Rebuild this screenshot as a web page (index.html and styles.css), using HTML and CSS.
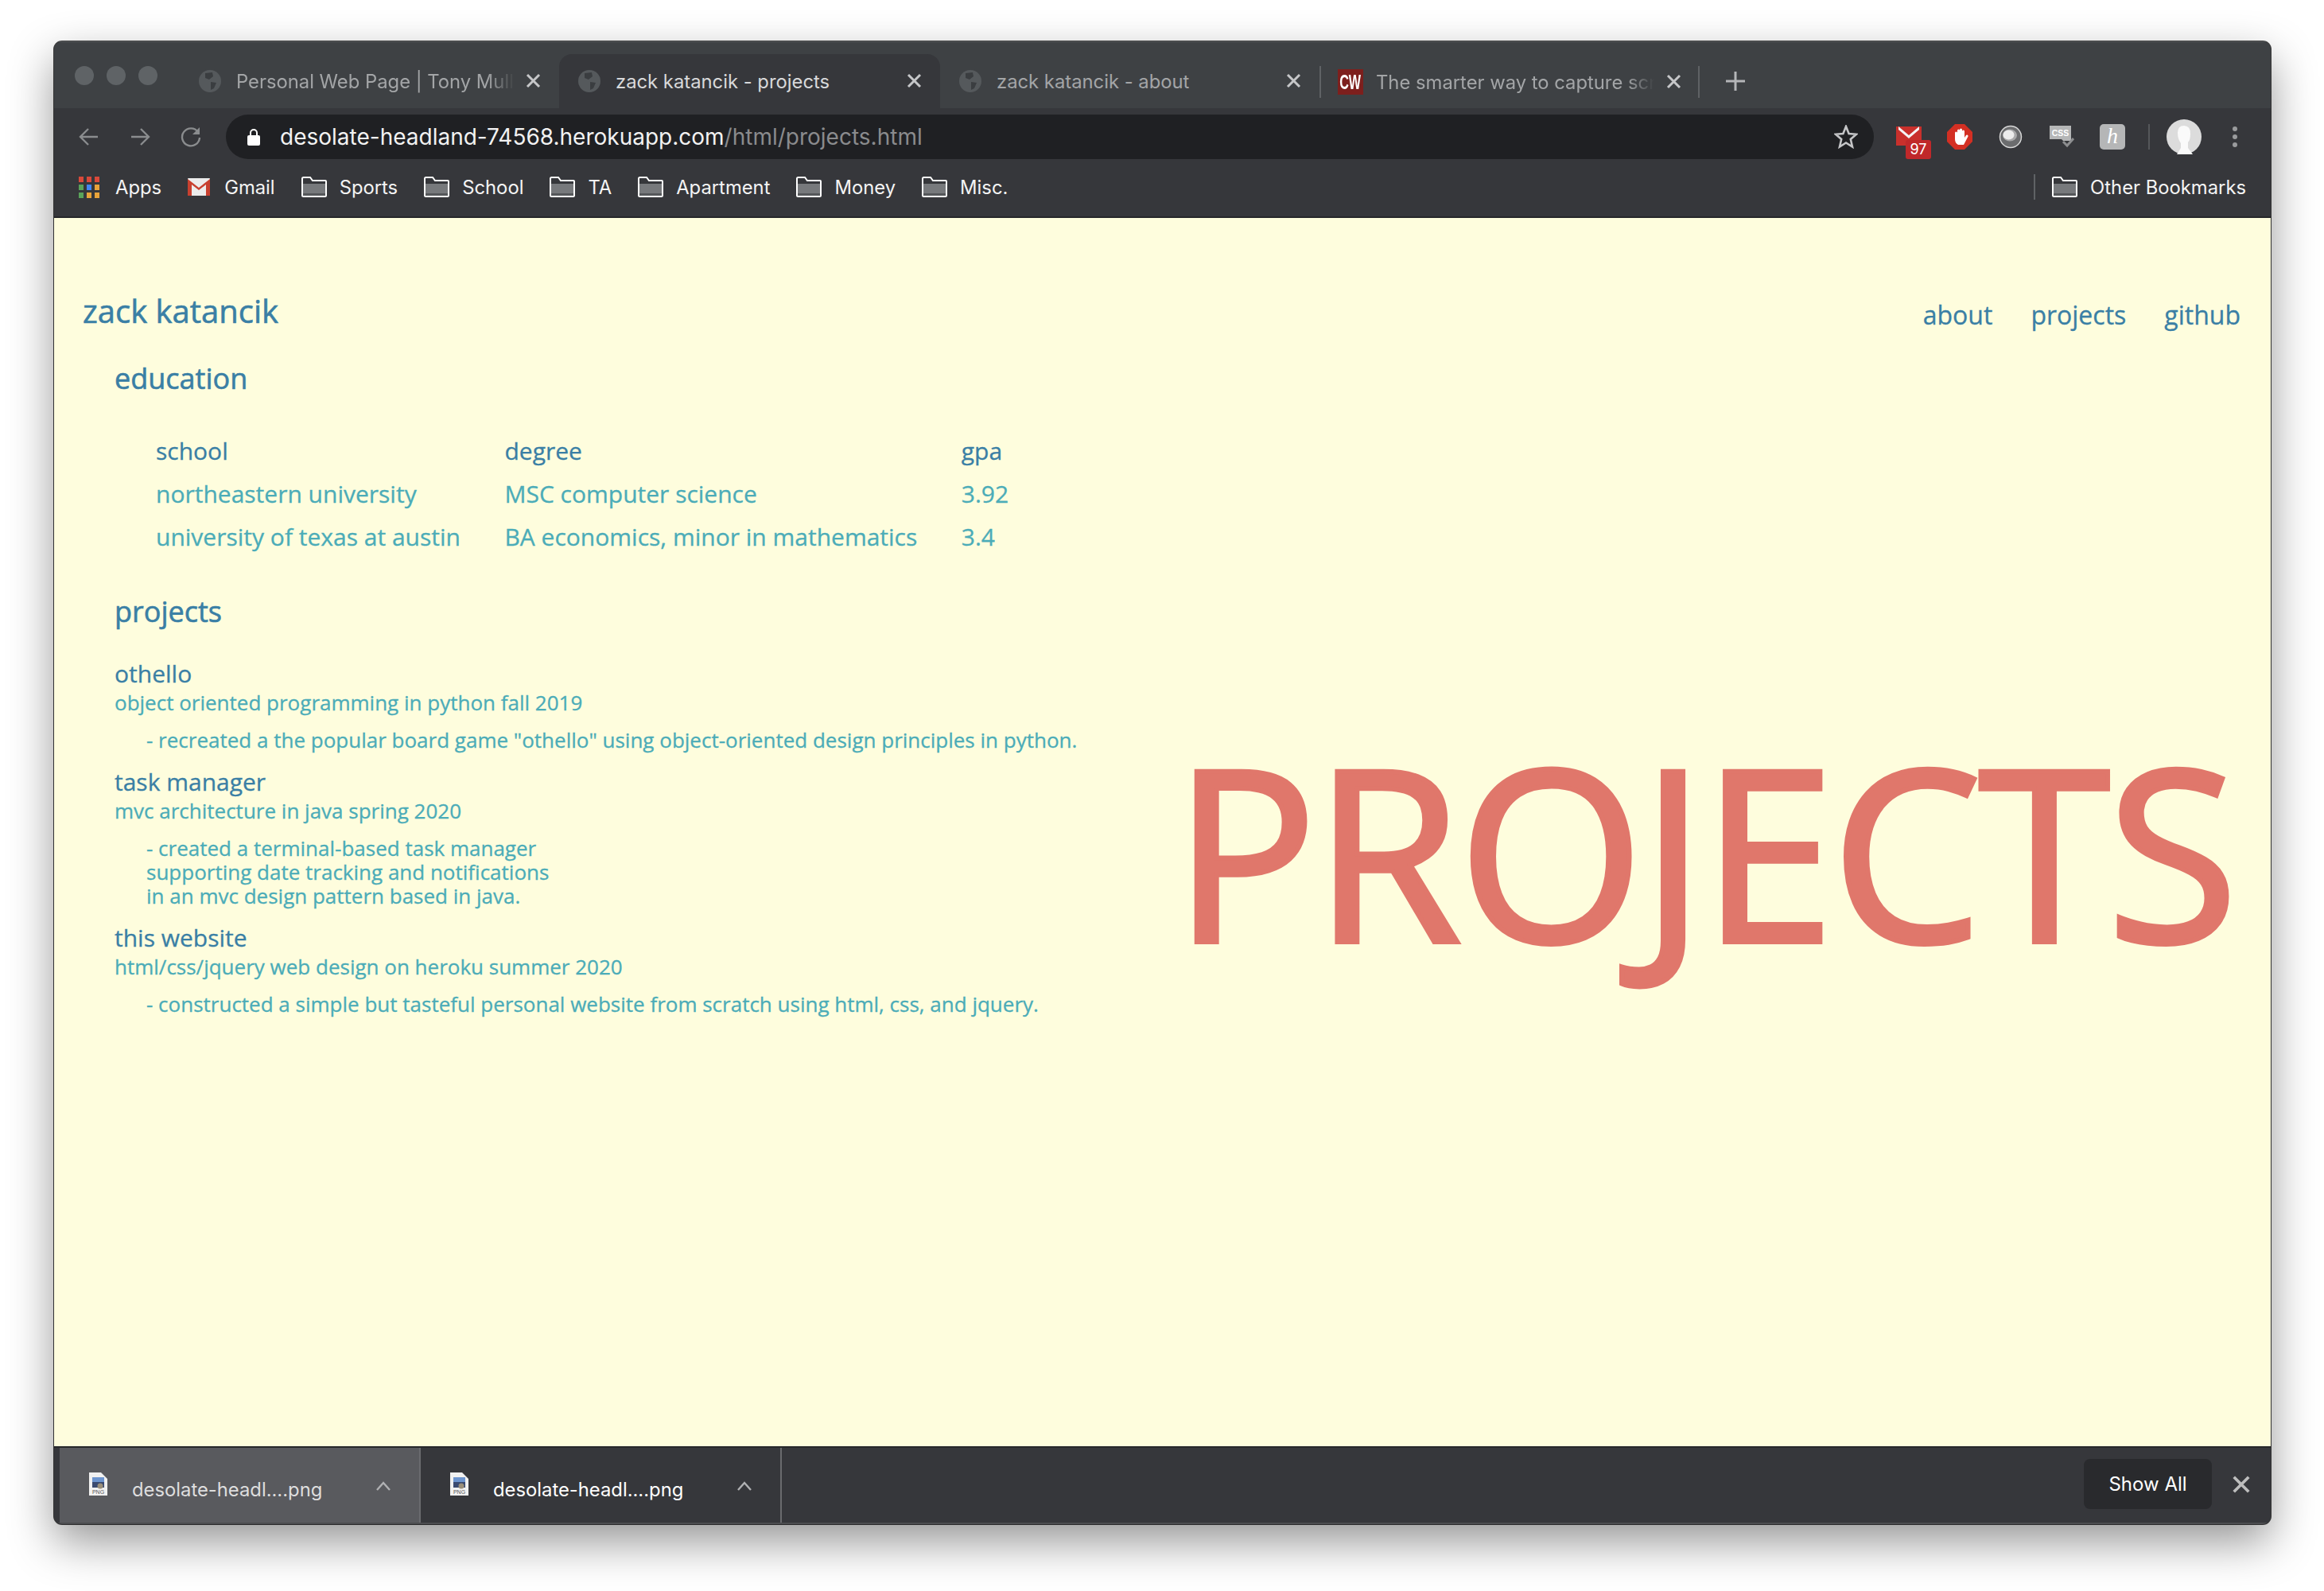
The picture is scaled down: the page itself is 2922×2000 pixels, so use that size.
FILE: index.html
```html
<!DOCTYPE html>
<html>
<head>
    <meta charset="utf-8">
    <link rel="stylesheet" href="styles.css">
    <title>zack katancik - projects</title>
</head>
<body>
<svg width="0" height="0" class="defs">
    <symbol id="globe" viewBox="0 0 28 28">
        <circle cx="14" cy="14" r="14" fill="#55595c"/>
        <path d="M8 4 L17 3 L18 8 L13 12 L8 10 Z M15 15 L22 16 L19 23 L15 25 Z" fill="#3a3d40"/>
    </symbol>
    <symbol id="folder" viewBox="0 0 32 26">
        <path d="M1 5 V2.5 Q1 1 2.5 1 H11 L14 5 H30 Q31 5 31 6 V23.5 Q31 25 29.5 25 H2.5 Q1 25 1 23.5 Z" fill="none" stroke="#fff" stroke-width="2"/>
        <rect x="2" y="9" width="28" height="12" fill="#77797c"/>
        <rect x="2" y="21" width="28" height="3" fill="#55575a"/>
    </symbol>
    <symbol id="close" viewBox="0 0 14 14">
        <path d="M2 2 L12 12 M12 2 L2 12" fill="none" stroke="currentColor" stroke-width="2"/>
    </symbol>
    <symbol id="pngfile" viewBox="0 0 23 29">
        <path d="M0 0 H15 L23 8 V29 H0 Z" fill="#f1f1f1"/>
        <rect x="4" y="6" width="15" height="8" fill="#6d95cf"/>
        <rect x="4" y="12" width="15" height="7" fill="#3a4a70"/>
        <circle cx="14" cy="17" r="3.5" fill="#9a8f7a"/>
        <text x="11.5" y="27" font-size="7" text-anchor="middle" fill="#555" font-family="Liberation Sans, sans-serif">PNG</text>
    </symbol>
</svg>

<div class="window">
    <div class="tabstrip">
        <div class="lights"><span></span><span></span><span></span></div>
        <div class="tab tab-first">
            <svg class="favicon"><use href="#globe"/></svg>
            <span class="tab-title fade">Personal Web Page | Tony Mull</span>
            <svg class="tab-close"><use href="#close"/></svg>
        </div>
        <div class="tab tab-active">
            <svg class="favicon"><use href="#globe"/></svg>
            <span class="tab-title">zack katancik - projects</span>
            <svg class="tab-close"><use href="#close"/></svg>
        </div>
        <div class="tab tab-third">
            <svg class="favicon"><use href="#globe"/></svg>
            <span class="tab-title">zack katancik - about</span>
            <svg class="tab-close"><use href="#close"/></svg>
        </div>
        <div class="tab tab-fourth">
            <span class="cw-icon"><span>CW</span></span>
            <span class="tab-title fade">The smarter way to capture scr</span>
            <svg class="tab-close"><use href="#close"/></svg>
        </div>
        <svg class="new-tab" viewBox="0 0 24 24"><path d="M12 0 V24 M0 12 H24" stroke="#b4b6b8" stroke-width="3" fill="none"/></svg>
    </div>

    <div class="toolbar">
        <svg class="nav-icon" viewBox="0 0 28 28"><path d="M25 14 H4 M13 4 L3 14 L13 24" fill="none" stroke="#8a8c8e" stroke-width="2.4"/></svg>
        <svg class="nav-icon" viewBox="0 0 28 28"><path d="M3 14 H24 M15 4 L25 14 L15 24" fill="none" stroke="#8a8c8e" stroke-width="2.4"/></svg>
        <svg class="nav-icon" viewBox="0 0 28 28"><path d="M23 8 A11 11 0 1 0 25 15" fill="none" stroke="#8a8c8e" stroke-width="2.4"/><path d="M25 2 V11 H16 Z" fill="#8a8c8e"/></svg>
        <div class="omnibox">
            <svg class="lock" viewBox="0 0 16 22"><path d="M4 9 V6 A4 4 0 0 1 12 6 V9" fill="none" stroke="#fff" stroke-width="2"/><rect x="0" y="9" width="16" height="13" rx="2" fill="#fff"/></svg>
            <span class="url">desolate-headland-74568.herokuapp.com<span class="url-path">/html/projects.html</span></span>
            <svg class="star" viewBox="0 0 30 30"><path d="M15 2 L18.6 11 L28 11.8 L20.8 18 L23 27.5 L15 22.5 L7 27.5 L9.2 18 L2 11.8 L11.4 11 Z" fill="none" stroke="#c4c5c7" stroke-width="2.6"/></svg>
        </div>
        <div class="extensions">
            <div class="ext ext-gmail">
                <svg viewBox="0 0 32 24"><rect width="32" height="24" fill="#c9302c"/><path d="M3 0 L16 11 L29 0 V4 L16 15 L3 4 Z" fill="#f4f4f4"/></svg>
                <span class="badge">97</span>
            </div>
            <svg class="ext" viewBox="0 0 32 32"><path d="M10 0 H22 L32 10 V22 L22 32 H10 L0 22 V10 Z" fill="#d32f23"/><path d="M10 19 V11 a1.5 1.5 0 0 1 3 0 V8 a1.5 1.5 0 0 1 3 0 V7 a1.5 1.5 0 0 1 3 0 V9 a1.5 1.5 0 0 1 3 0 V17 L24 14 a1.5 1.5 0 0 1 2.5 1.5 L21 26 H14 Q10 24 10 19 Z" fill="#fff"/></svg>
            <svg class="ext" viewBox="0 0 32 32"><circle cx="16" cy="16" r="13.5" fill="#6b6c6e" stroke="#d8d8d8" stroke-width="1.5"/><ellipse cx="15" cy="14" rx="9" ry="7.5" fill="#a9a9aa"/><ellipse cx="13.5" cy="13.5" rx="7" ry="6" fill="#ececec"/></svg>
            <svg class="ext" viewBox="0 0 32 32"><path d="M1 2 H28 V21 H18 L16 19 H1 Z" fill="#b5b6b7"/><text x="14.5" y="15" font-size="10.5" font-weight="bold" text-anchor="middle" fill="#fff" font-family="Liberation Sans, sans-serif">CSS</text><path d="M18 22 L23 27 L31 18" fill="none" stroke="#8c8d8f" stroke-width="3"/></svg>
            <div class="ext ext-h">h</div>
        </div>
        <div class="vrule"></div>
        <div class="avatar">
            <svg viewBox="0 0 44 44"><circle cx="22" cy="22" r="22" fill="#dcdcdc"/><path d="M22 8 Q30 8 30 18 Q30 26 27 29 V36 L33 44 H13 L18 36 V30 Q14 25 14 17 Q14 8 22 8 Z" fill="#fafafa"/></svg>
        </div>
        <div class="kebab"><span></span><span></span><span></span></div>
    </div>

    <div class="bookmarks">
        <div class="bm bm-apps">
            <svg class="apps-grid" viewBox="0 0 26 27">
                <g fill="#d9493a"><rect x="0" y="0" width="6" height="7"/><rect x="10" y="0" width="6" height="7"/><rect x="20" y="0" width="6" height="7"/></g>
                <g><rect x="0" y="10" width="6" height="7" fill="#5aa35a"/><rect x="10" y="10" width="6" height="7" fill="#4285f4"/><rect x="20" y="10" width="6" height="7" fill="#e8a33a"/></g>
                <g><rect x="0" y="20" width="6" height="7" fill="#5aa35a"/><rect x="10" y="20" width="6" height="7" fill="#e8a33a"/><rect x="20" y="20" width="6" height="7" fill="#e8a33a"/></g>
            </svg>
            Apps
        </div>
        <div class="bm bm-gmail">
            <svg class="gmail-icon" viewBox="0 0 28 22"><rect width="28" height="22" rx="1" fill="#ececec"/><path d="M0 1 L14 12 L28 1 V22 H23 V8 L14 15 L5 8 V22 H0 Z" fill="#c8402f"/></svg>
            Gmail
        </div>
        <div class="bm"><svg class="folder"><use href="#folder"/></svg>Sports</div>
        <div class="bm"><svg class="folder"><use href="#folder"/></svg>School</div>
        <div class="bm"><svg class="folder"><use href="#folder"/></svg>TA</div>
        <div class="bm"><svg class="folder"><use href="#folder"/></svg>Apartment</div>
        <div class="bm"><svg class="folder"><use href="#folder"/></svg>Money</div>
        <div class="bm"><svg class="folder"><use href="#folder"/></svg>Misc.</div>
        <div class="bm bm-other"><svg class="folder"><use href="#folder"/></svg>Other Bookmarks</div>
    </div>

    <div class="page">
        <div class="page-top">
            <div class="site-name">zack katancik</div>
            <div class="site-nav">
                <span>about</span>
                <span>projects</span>
                <span>github</span>
            </div>
        </div>
        <div class="page-main">
            <div class="resume">
                <h2 class="section-title">education</h2>
                <table class="edu">
                    <tr class="edu-head"><td>school</td><td>degree</td><td>gpa</td></tr>
                    <tr><td>northeastern university</td><td>MSC computer science</td><td>3.92</td></tr>
                    <tr><td>university of texas at austin</td><td>BA economics, minor in mathematics</td><td>3.4</td></tr>
                </table>
                <h2 class="section-title projects-title">projects</h2>
                <div class="project">
                    <div class="project-name">othello</div>
                    <div class="project-sub">object oriented programming in python fall 2019</div>
                    <div class="project-desc">- recreated a the popular board game "othello" using object-oriented design principles in python.</div>
                </div>
                <div class="project">
                    <div class="project-name">task manager</div>
                    <div class="project-sub">mvc architecture in java spring 2020</div>
                    <div class="project-desc">- created a terminal-based task manager<br>supporting date tracking and notifications<br>in an mvc design pattern based in java.</div>
                </div>
                <div class="project">
                    <div class="project-name">this website</div>
                    <div class="project-sub">html/css/jquery web design on heroku summer 2020</div>
                    <div class="project-desc">- constructed a simple but tasteful personal website from scratch using html, css, and jquery.</div>
                </div>
            </div>
            <div class="big-word">PROJECTS</div>
        </div>
    </div>

    <div class="downloads">
        <div class="dl dl-hover">
            <svg class="dl-icon"><use href="#pngfile"/></svg>
            <span class="dl-name">desolate-headl....png</span>
            <svg class="dl-chev" viewBox="0 0 20 12"><path d="M2 11 L10 2 L18 11" fill="none" stroke="#b0b1b3" stroke-width="2.4"/></svg>
        </div>
        <div class="dl">
            <svg class="dl-icon"><use href="#pngfile"/></svg>
            <span class="dl-name">desolate-headl....png</span>
            <svg class="dl-chev" viewBox="0 0 20 12"><path d="M2 11 L10 2 L18 11" fill="none" stroke="#b0b1b3" stroke-width="2.4"/></svg>
        </div>
        <div class="show-all">Show All</div>
        <svg class="dl-close"><use href="#close"/></svg>
    </div>
</div>
</body>
</html>
```

FILE: styles.css
```css
html, body {
    margin: 0;
    background: #fff;
}
body {
    height: 2000px;
    padding: 52px 0 0 68px;
    box-sizing: border-box;
}
.defs {
    position: absolute;
}
.window {
    width: 2787px;
    height: 1864px;
    display: flex;
    flex-direction: column;
    border-radius: 10px;
    overflow: hidden;
    background: #36373b;
    box-shadow: 0 22px 56px rgba(0, 0, 0, 0.42), 0 0 0 1px rgba(0, 0, 0, 0.75);
    font-family: Inter, sans-serif;
}

/* tab strip */
.tabstrip {
    height: 84px;
    flex: none;
    display: flex;
    align-items: flex-end;
    background: #3e4144;
    border-top: 1px solid #55585b;
    box-sizing: border-box;
}
.lights {
    width: 162px;
    padding: 30px 0 0 26px;
    box-sizing: border-box;
    display: flex;
    gap: 16px;
    flex: none;
    align-self: flex-start;
}
.lights span {
    width: 24px;
    height: 24px;
    border-radius: 50%;
    background: #5f6366;
}
.tab {
    height: 68px;
    display: flex;
    align-items: center;
    box-sizing: border-box;
    color: #a3a5a7;
    font-size: 23.8px;
    flex: none;
    position: relative;
}
.tab-first {
    width: 473px;
    padding-left: 20px;
}
.tab-active {
    width: 479px;
    padding-left: 24px;
    background: #36373b;
    border-radius: 16px 16px 0 0;
    color: #d8d9da;
}
.tab-third {
    width: 477px;
    padding-left: 24px;
}
.tab-fourth {
    width: 478px;
    padding-left: 21px;
    border-left: 2px solid #5f6265;
    height: 40px;
    margin-bottom: 13px;
    border-right: 2px solid #5f6265;
}
.favicon {
    width: 28px;
    height: 28px;
    flex: none;
    margin-right: 19px;
}
.tab-title {
    white-space: nowrap;
    overflow: hidden;
    width: 350px;
    flex: none;
}
.fade {
    -webkit-mask-image: linear-gradient(to right, #000 90%, transparent 100%);
    mask-image: linear-gradient(to right, #000 90%, transparent 100%);
}
.tab-close {
    width: 21px;
    height: 21px;
    color: #c6c7c9;
    position: absolute;
    right: 22px;
    top: 23px;
}
.tab-fourth .tab-close {
    top: 9px;
    right: 20px;
}
.cw-icon {
    width: 32px;
    height: 32px;
    margin-right: 16px;
    flex: none;
    background: #7d1f1d;
    color: #fff;
    font-family: "Liberation Sans", sans-serif;
    font-size: 26px;
    font-weight: bold;
    line-height: 32px;
    text-align: center;
    display: flex;
    justify-content: center;
}
.cw-icon span {
    transform: scaleX(0.62);
}
.new-tab {
    width: 24px;
    height: 24px;
    margin: 0 0 22px 33px;
}

/* toolbar */
.toolbar {
    height: 72px;
    flex: none;
    display: flex;
    align-items: center;
    padding: 0 0 0 30px;
    box-sizing: border-box;
    gap: 36px;
    background: #36373b;
}
.nav-icon {
    width: 28px;
    height: 28px;
    flex: none;
}
.omnibox {
    width: 2072px;
    height: 56px;
    margin-left: -6px;
    display: flex;
    align-items: center;
    background: #1f2023;
    border-radius: 28px;
    padding: 0 20px 0 27px;
    box-sizing: border-box;
    flex: none;
}
.lock {
    width: 16px;
    height: 22px;
    flex: none;
}
.url {
    margin-left: 25px;
    font-size: 28px;
    color: #f2f2f2;
    flex: 1;
    white-space: nowrap;
}
.url-path {
    color: #8a8b8d;
}
.star {
    width: 30px;
    height: 30px;
    flex: none;
}
.extensions {
    display: flex;
    align-items: center;
    gap: 32px;
    margin-left: -8px;
}
.ext {
    width: 32px;
    height: 32px;
    flex: none;
    position: relative;
}
.ext-gmail svg {
    width: 32px;
    height: 24px;
    display: block;
    position: absolute;
    top: 3px;
}
.badge {
    position: absolute;
    left: 12px;
    top: 20px;
    width: 32px;
    height: 24px;
    border-radius: 3px;
    background: #c0282a;
    color: #fff;
    font-size: 18px;
    line-height: 24px;
    text-align: center;
}
.ext-h {
    background: #b5b6b7;
    border-radius: 5px;
    color: #fff;
    font-family: "Liberation Serif", serif;
    font-style: italic;
    font-size: 28px;
    line-height: 30px;
    text-align: center;
}
.vrule {
    width: 2px;
    height: 32px;
    background: #55575a;
    margin-left: -7px;
}
.avatar {
    width: 44px;
    height: 44px;
    margin-left: -15px;
    flex: none;
}
.avatar svg {
    display: block;
    width: 44px;
    height: 44px;
}
.kebab {
    display: flex;
    flex-direction: column;
    gap: 4px;
    margin-left: 3px;
}
.kebab span {
    width: 6px;
    height: 6px;
    border-radius: 50%;
    background: #9a9b9d;
}

/* bookmarks */
.bookmarks {
    height: 66px;
    flex: none;
    display: flex;
    align-items: center;
    padding: 0 31px 10px 31px;
    box-sizing: border-box;
    gap: 33px;
    background: #36373b;
    color: #f4f4f4;
    font-size: 23.8px;
    border-bottom: 2px solid #26272a;
}
.bm {
    display: flex;
    align-items: center;
    white-space: nowrap;
}
.folder {
    width: 32px;
    height: 26px;
    flex: none;
    margin-right: 16px;
}
.apps-grid {
    width: 26px;
    height: 27px;
    margin-right: 20px;
}
.gmail-icon {
    width: 28px;
    height: 22px;
    margin-right: 18px;
}
.bm-other {
    margin-left: auto;
    border-left: 2px solid #5f6265;
    padding-left: 21px;
    height: 32px;
}

/* page content */
.page {
    flex: 1;
    background: #fefddd;
    padding: 0 38px 0 36px;
    font-family: "Open Sans", sans-serif;
    color: #4bacb8;
    -webkit-text-stroke: 0.3px currentColor;
}
.page-top {
    display: flex;
    justify-content: space-between;
    align-items: flex-end;
    padding-top: 90px;
}
.site-name {
    font-size: 40px;
    line-height: 54px;
    color: #3a7fa5;
    -webkit-text-stroke: 0.6px currentColor;
}
.site-nav {
    display: flex;
    gap: 48px;
    font-size: 32px;
    line-height: 44px;
    color: #3a7fa5;
}
.page-main {
    display: flex;
    justify-content: space-between;
}
.resume {
    padding-left: 40px;
    flex: none;
}
.section-title {
    margin: 33px 0 0;
    font-size: 36px;
    line-height: 50px;
    font-weight: 400;
    color: #3a7fa5;
    -webkit-text-stroke: 0.6px currentColor;
}
.edu {
    border-collapse: collapse;
    margin: 39px 0 0 36px;
    font-size: 30px;
    line-height: 54px;
}
.edu td {
    padding: 0 39.5px 0 16px;
    white-space: nowrap;
}
.edu-head {
    color: #3a7fa5;
}
.projects-title {
    margin-top: 42px;
}
.project {
    margin-top: 33px;
}
.project + .project {
    margin-top: 18px;
}
.project-name {
    font-size: 30px;
    line-height: 40px;
    color: #3a7fa5;
}
.project-sub {
    font-size: 26px;
    line-height: 33px;
}
.project-desc {
    font-size: 26px;
    line-height: 30px;
    padding: 15px 0 0 40px;
}
.big-word {
    font-size: 300px;
    line-height: 400px;
    color: #e0776b;
    margin: 450px 7px 0 0;
    letter-spacing: -3.8px;
    -webkit-text-stroke: 6px currentColor;
}

/* download bar */
.downloads {
    height: 98px;
    flex: none;
    display: flex;
    align-items: center;
    background: #36373b;
    border-top: 2px solid #26272a;
    border-bottom: 2px solid #4c4d50;
    padding: 0 24px 0 7px;
    box-sizing: border-box;
    color: #fff;
}
.dl {
    width: 454px;
    height: 94px;
    display: flex;
    align-items: center;
    padding-left: 37px;
    box-sizing: border-box;
    border-right: 2px solid #6a6b6e;
    background-clip: padding-box;
    font-size: 23.8px;
    flex: none;
}
.dl-hover {
    background: #595a5e;
    color: #dedede;
}
.dl-icon {
    width: 23px;
    height: 29px;
    margin: -3px 31px 0 0;
    flex: none;
}
.dl-name {
    white-space: nowrap;
    width: 238px;
    margin-top: 10px;
    flex: none;
}
.dl-chev {
    width: 20px;
    height: 12px;
    margin: 2px 0 0 68px;
    flex: none;
}
.show-all {
    margin: 0 0 3px auto;
    width: 161px;
    height: 63px;
    border-radius: 8px;
    background: #292a2d;
    font-size: 24px;
    line-height: 63px;
    text-align: center;
}
.dl-close {
    width: 26px;
    height: 26px;
    color: #bdbdbd;
    margin: 0 0 3px 24px;
    flex: none;
}
```
